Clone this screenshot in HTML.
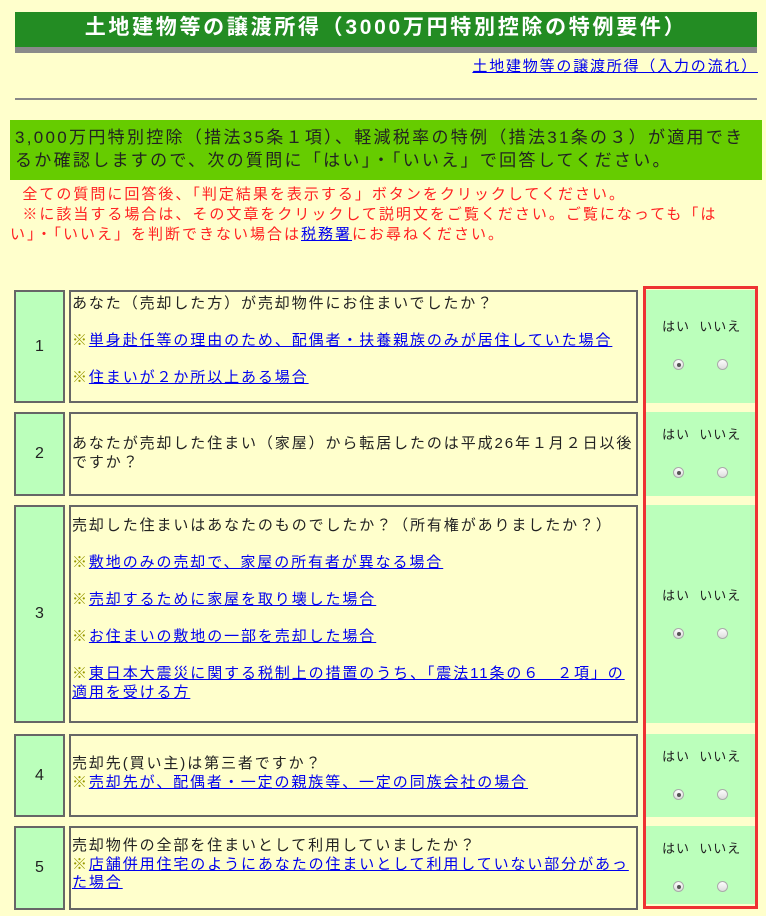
<!DOCTYPE html>
<html><head><meta charset="utf-8"><style>
body{margin:0;width:766px;height:916px;background:#ffffcc;font-family:"Liberation Sans","Noto Sans CJK JP",sans-serif;position:relative;overflow:hidden}
.a{position:absolute}
a{color:#0000ee;text-decoration:underline}
.num{position:absolute;left:14px;width:47px;background:#bbffbb;border:2px solid #666;font-size:16px;color:#222;display:flex;align-items:center;justify-content:center}
.q{position:absolute;left:69px;width:569px;background:#ffffcc;border:2px solid #666;font-size:15px;letter-spacing:1.9px;color:#222;line-height:18.5px;box-sizing:border-box;padding-left:1px}
.q .k{color:#999900}
.ans{position:absolute;left:646px;width:109px;background:#bbffbb;font-size:13px;color:#222}
.lab{position:absolute;left:16px;width:95px;letter-spacing:1px}
.r{position:absolute;width:11px;height:11px;border-radius:50%;border:1px solid #aaa;background:linear-gradient(#fdfdfd,#ddd);box-sizing:border-box}
.r.on::after{content:"";position:absolute;left:3px;top:3px;width:4px;height:4px;border-radius:50%;background:#555}
</style></head><body>
<div class="a" style="left:15px;top:12px;width:742px;height:35px;background:#238c23;border-bottom:6px solid #8a8a8a;color:#fff;font-weight:bold;font-size:21px;letter-spacing:2.7px;text-align:center;line-height:32px;white-space:nowrap">土地建物等の譲渡所得（3000万円特別控除の特例要件）</div>
<div class="a" style="right:8px;top:55px;font-size:15px;letter-spacing:1.8px;white-space:nowrap"><a>土地建物等の譲渡所得（入力の流れ）</a></div>
<div class="a" style="left:15px;top:98px;width:742px;height:2px;background:#888"></div>
<div class="a" style="left:10px;top:120px;width:752px;height:60px;background:#66cc00;font-size:17px;letter-spacing:2.3px;color:#222;line-height:23px;padding:6px 0 0 5px;box-sizing:border-box">3,000万円特別控除（措法35条１項）、軽減税率の特例（措法31条の３）が適用できるか確認しますので、次の質問に「はい」・「いいえ」で回答してください。</div>
<div class="a" style="left:10px;top:185px;width:740px;font-size:15px;letter-spacing:2px;color:#ff2222;line-height:20px">&nbsp;&nbsp;全ての質問に回答後、「判定結果を表示する」ボタンをクリックしてください。<br>&nbsp;&nbsp;※に該当する場合は、その文章をクリックして説明文をご覧ください。ご覧になっても「はい」・「いいえ」を判断できない場合は<a>税務署</a>にお尋ねください。</div>

<div class="a" style="left:643px;top:286px;width:109px;height:617px;border:3px solid #ee3333"></div>

<div class="num" style="top:290px;height:109px">1</div>
<div class="q" style="top:290px;height:113px;padding-top:3px">あなた（売却した方）が売却物件にお住まいでしたか？<br><br><span class="k">※</span><a>単身赴任等の理由のため、配偶者・扶養親族のみが居住していた場合</a><br><br><span class="k">※</span><a>住まいが２か所以上ある場合</a></div>
<div class="ans" style="top:290px;height:113px"><div class="lab" style="top:26px">はい&nbsp;&nbsp;いいえ</div><div class="r on" style="left:27px;top:69px"></div><div class="r" style="left:71px;top:69px"></div></div>

<div class="num" style="top:412px;height:80px">2</div>
<div class="q" style="top:412px;height:84px;padding-top:21px">あなたが売却した住まい（家屋）から転居したのは平成26年１月２日以後ですか？</div>
<div class="ans" style="top:412px;height:84px"><div class="lab" style="top:12px">はい&nbsp;&nbsp;いいえ</div><div class="r on" style="left:27px;top:55px"></div><div class="r" style="left:71px;top:55px"></div></div>

<div class="num" style="top:505px;height:214px">3</div>
<div class="q" style="top:505px;height:218px;padding-top:10px">売却した住まいはあなたのものでしたか？（所有権がありましたか？）<br><br><span class="k">※</span><a>敷地のみの売却で、家屋の所有者が異なる場合</a><br><br><span class="k">※</span><a>売却するために家屋を取り壊した場合</a><br><br><span class="k">※</span><a>お住まいの敷地の一部を売却した場合</a><br><br><span class="k">※</span><a>東日本大震災に関する税制上の措置のうち、「震法11条の６　２項」の適用を受ける方</a></div>
<div class="ans" style="top:505px;height:218px"><div class="lab" style="top:80px">はい&nbsp;&nbsp;いいえ</div><div class="r on" style="left:27px;top:123px"></div><div class="r" style="left:71px;top:123px"></div></div>

<div class="num" style="top:734px;height:79px">4</div>
<div class="q" style="top:734px;height:83px;padding-top:19px">売却先(買い主)は第三者ですか？<br><span class="k">※</span><a>売却先が、配偶者・一定の親族等、一定の同族会社の場合</a></div>
<div class="ans" style="top:734px;height:83px"><div class="lab" style="top:12px">はい&nbsp;&nbsp;いいえ</div><div class="r on" style="left:27px;top:55px"></div><div class="r" style="left:71px;top:55px"></div></div>

<div class="num" style="top:826px;height:80px">5</div>
<div class="q" style="top:826px;height:84px;padding-top:9px">売却物件の全部を住まいとして利用していましたか？<br><span class="k">※</span><a>店舗併用住宅のようにあなたの住まいとして利用していない部分があった場合</a></div>
<div class="ans" style="top:826px;height:78px"><div class="lab" style="top:12px">はい&nbsp;&nbsp;いいえ</div><div class="r on" style="left:27px;top:55px"></div><div class="r" style="left:71px;top:55px"></div></div>
</body></html>
